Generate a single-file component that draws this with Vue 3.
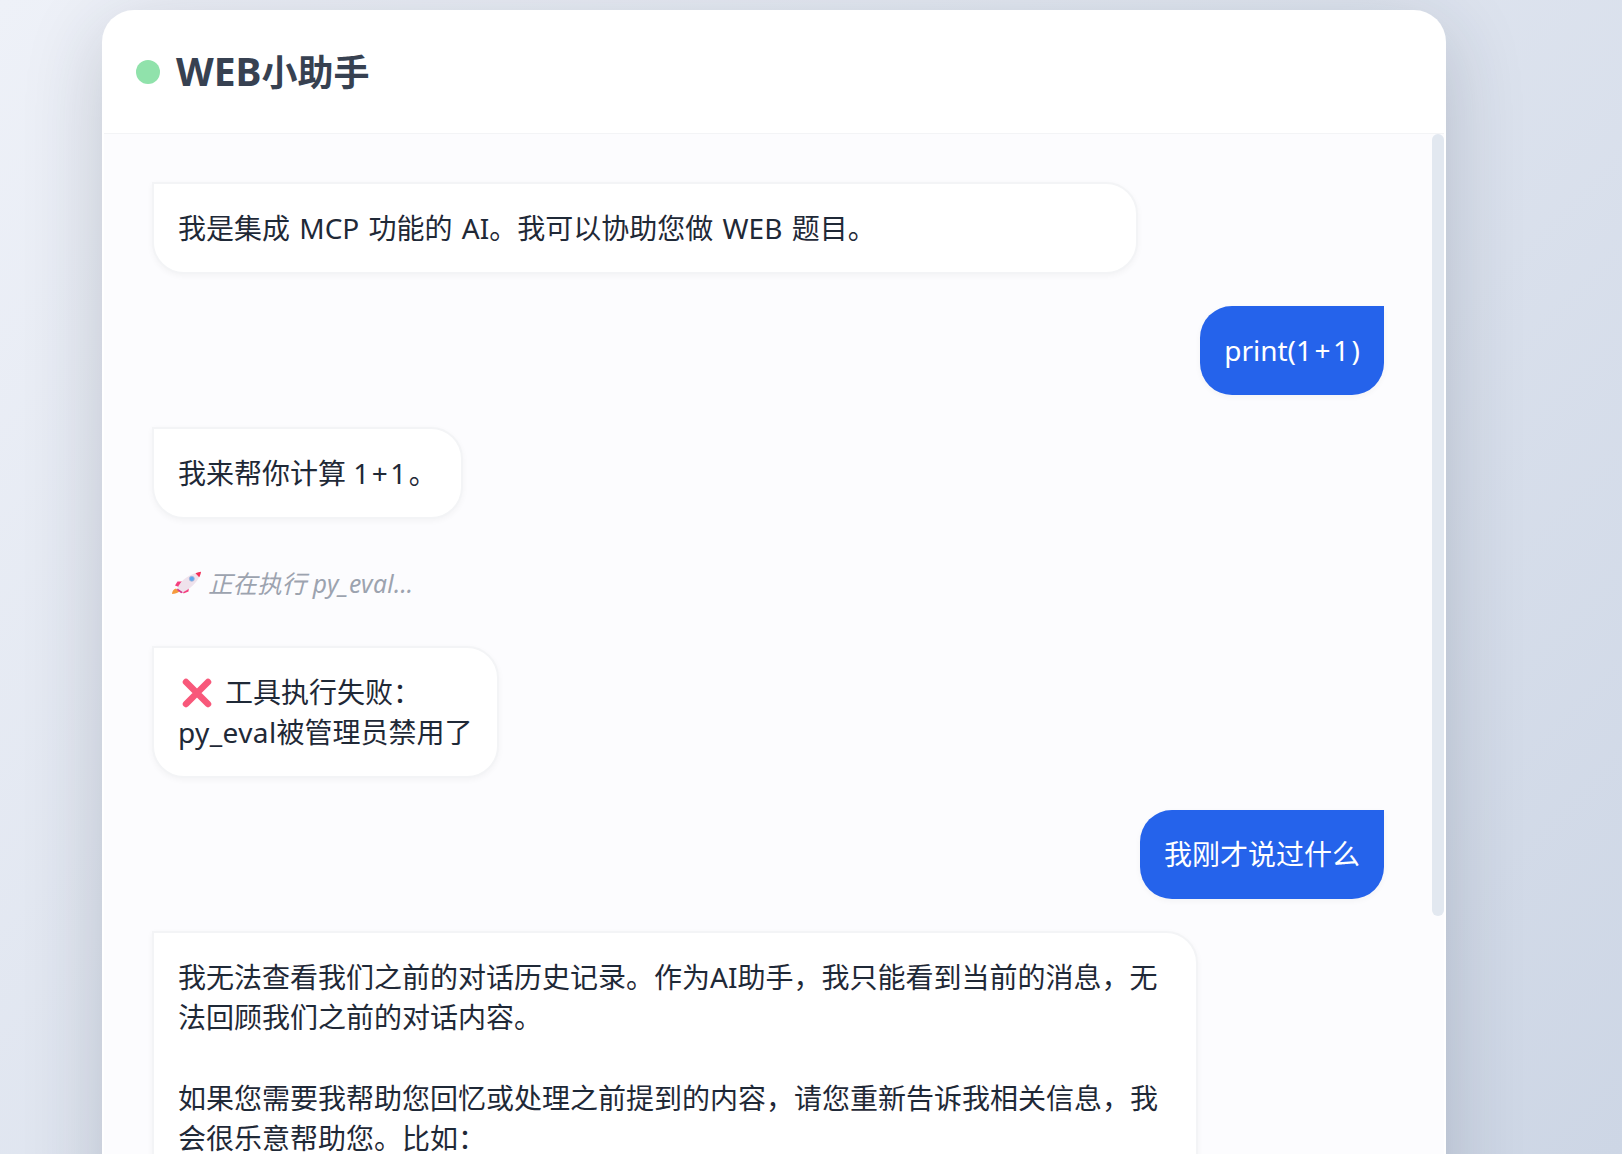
<script setup>
const lastLines = [
    '我无法查看我们之前的对话历史记录。作为AI助手，我只能看到当前的消息，无',
    '法回顾我们之前的对话内容。',
    '',
    '如果您需要我帮助您回忆或处理之前提到的内容，请您重新告诉我相关信息，我',
    '会很乐意帮助您。比如：',
]
</script>

<template>
    <div class="page">
        <div class="chat-card">
            <header class="chat-header">
                <span class="status-dot"></span>
                <h1 class="chat-title"><span class="title-lat">WEB</span>小助手</h1>
            </header>

            <div class="chat-body">
                <div class="msg bot first">我是集成 MCP 功能的 AI。我可以协助您做 WEB 题目。</div>
                <div class="msg user">print(<span class="num">1+1</span>)</div>
                <div class="msg bot">我来帮你计算 <span class="num">1+1</span>。</div>

                <div class="tool-status">
                    <svg class="rocket" viewBox="0 0 29 23" aria-hidden="true">
                        <path d="M0 23c0-2.500 1.500-5 4-5.500L7.500 20.500C5.500 22 3 23 0 23z" fill="#f59a3e" />
                        <path d="M10 10.500H5.500L3 14.500 7 16z" fill="#f43f7e" />
                        <path d="M17 15l-.5 5.500-5 2L10.500 19z" fill="#f43f7e" />
                        <path d="M5.500 17.500C8 9.500 18 2.500 29 .8c-1 6.700-8 16-18 20.500z" fill="#efe2ec" />
                        <path d="M23.500 2.200C25.500 1.500 27.500 1 29 .8c-.2 1.900-.9 3.800-1.800 5.500z" fill="#f43058" />
                        <circle cx="19.800" cy="7.800" r="2.500" fill="#5aa9ef" stroke="#a8b4d8" stroke-width=".8" />
                        <path d="M5.500 17.500L11 21.300l-1.800.9-4.200-3.200z" fill="#d6398f" />
                    </svg>
                    <span>正在执行 <span class="lat">py_eval</span>...</span>
                </div>

                <div class="msg bot">
                    <svg class="cross" viewBox="0 0 30 30" aria-hidden="true">
                        <path d="M4 4l22 22M26 4L4 26" fill="none" stroke="#f8587a" stroke-width="6.500" stroke-linecap="round" />
                    </svg>工具执行失败：<br /><span class="lat">py_eval</span>被管理员禁用了
                </div>

                <div class="msg user">我刚才说过什么</div>
                <div class="msg bot long">{{ lastLines.join('\n') }}</div>

                <div class="scroll-thumb"></div>
            </div>
        </div>
    </div>
</template>

<style>
    html,
    body {
        margin: 0;
        height: 100%;
        overflow: hidden;
    }
</style>

<style scoped>
    .page {
        box-sizing: border-box;
        height: 1154px;
        padding: 10px 176px 0 102px;
        overflow: hidden;
        background: linear-gradient(135deg, #eef1f8 0%, #cdd6e5 100%);
        font-family: 'Noto Sans', 'Noto Sans CJK SC', sans-serif;
    }

    .chat-card {
        box-sizing: border-box;
        height: 1300px;
        display: flex;
        flex-direction: column;
        background: #fff;
        border: 2px solid rgba(255, 255, 255, 0.9);
        border-radius: 32px;
        box-shadow: 0 20px 80px rgba(30, 41, 59, 0.2);
        overflow: hidden;
    }

    .chat-header {
        display: flex;
        align-items: center;
        gap: 16px;
        height: 122px;
        padding: 0 32px 2px;
        box-sizing: border-box;
        border-bottom: 1px solid #f3f4f6;
        flex-shrink: 0;
    }
    .status-dot {
        width: 24px;
        height: 24px;
        border-radius: 50%;
        background: #90e2ab;
    }
    .chat-title {
        margin: 0;
        font-size: 36px;
        line-height: 44px;
        font-weight: 700;
        color: #374151;
    }
    .title-lat {
        font-size: 39px;
    }

    .chat-body {
        position: relative;
        flex: 1;
        display: flex;
        flex-direction: column;
        align-items: flex-start;
        gap: 32px;
        padding: 48px 60px 48px 48px;
        background: #fcfcfe;
    }

    .msg {
        box-sizing: border-box;
        padding: 24px;
        font-size: 28px;
        line-height: 40.3px;
        border-radius: 32px;
    }
    .msg.bot {
        color: #1f2937;
        background: #fff;
        border: 2px solid #f3f4f6;
        border-top-left-radius: 0;
        box-shadow: 0 2px 6px rgba(0, 0, 0, 0.04);
    }
    .msg.first {
        width: 986px;
        word-spacing: 2px;
    }
    .msg.long {
        width: 1046px;
        white-space: pre-line;
    }
    .msg.user {
        align-self: flex-end;
        color: #fff;
        background: #2563eb;
        border-top-right-radius: 0;
        box-shadow: 0 2px 6px rgba(0, 0, 0, 0.04);
    }

    /* Latin runs sit a touch wider than the bundled face */
    .lat {
        letter-spacing: 0.4px;
    }
    .num {
        letter-spacing: 2.5px;
    }

    .cross {
        width: 30px;
        height: 30px;
        margin: 0 13px 0 4px;
        vertical-align: -5px;
    }

    .tool-status {
        display: flex;
        align-items: center;
        gap: 7px;
        height: 63px;
        padding-left: 20px;
        font-size: 24.6px;
        font-style: italic;
        color: #9ca3af;
    }
    .rocket {
        width: 29px;
        height: 23px;
    }

    .scroll-thumb {
        position: absolute;
        top: 0;
        right: 0;
        width: 12px;
        height: 782px;
        border-radius: 6px;
        background: #e2e8f0;
    }
</style>
